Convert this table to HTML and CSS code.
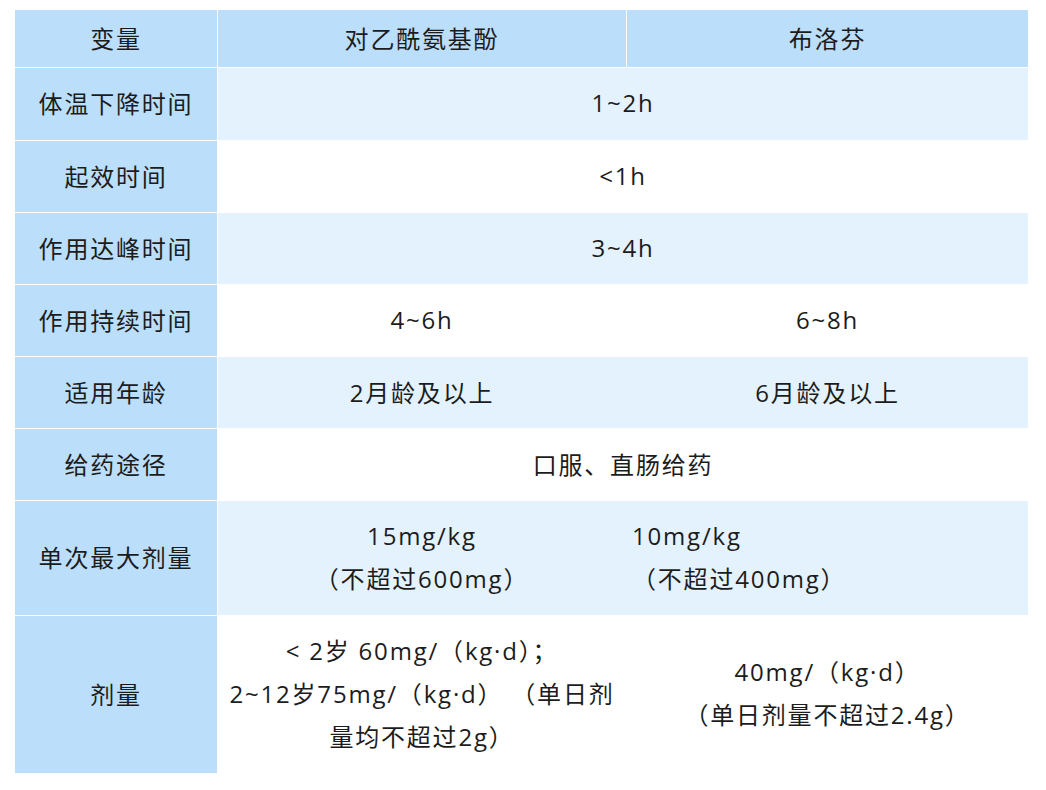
FILE: index.html
```html
<!DOCTYPE html>
<html lang="zh-CN">
<head>
<meta charset="utf-8">
<title>对乙酰氨基酚与布洛芬</title>
<link rel="stylesheet" href="styles.css">
</head>
<body>
<div class="table">
  <div class="row head">
    <div class="label">变量</div>
    <div class="vals two">
      <div class="cell">对乙酰氨基酚</div>
      <div class="cell">布洛芬</div>
    </div>
  </div>
  <div class="row r72 light">
    <div class="label">体温下降时间</div>
    <div class="vals one"><div class="cell">1~2h</div></div>
  </div>
  <div class="row r71 white">
    <div class="label">起效时间</div>
    <div class="vals one"><div class="cell">&lt;1h</div></div>
  </div>
  <div class="row r71 light">
    <div class="label">作用达峰时间</div>
    <div class="vals one"><div class="cell">3~4h</div></div>
  </div>
  <div class="row r71 white">
    <div class="label">作用持续时间</div>
    <div class="vals two">
      <div class="cell">4~6h</div>
      <div class="cell">6~8h</div>
    </div>
  </div>
  <div class="row r71 light">
    <div class="label">适用年龄</div>
    <div class="vals two">
      <div class="cell">2月龄及以上</div>
      <div class="cell">6月龄及以上</div>
    </div>
  </div>
  <div class="row r71 white">
    <div class="label">给药途径</div>
    <div class="vals one"><div class="cell">口服、直肠给药</div></div>
  </div>
  <div class="row r114 light">
    <div class="label">单次最大剂量</div>
    <div class="vals two">
      <div class="cell multi">15mg/kg<br>（不超过600mg）</div>
      <div class="cell multi left">10mg/kg<br>（不超过400mg）</div>
    </div>
  </div>
  <div class="row r157 white">
    <div class="label">剂量</div>
    <div class="vals two">
      <div class="cell multi">&lt; 2岁 60mg/（kg·d）；<br>2~12岁75mg/（kg·d） （单日剂<br>量均不超过2g）</div>
      <div class="cell multi">40mg/（kg·d）<br>（单日剂量不超过2.4g）</div>
    </div>
  </div>
</div>
</body>
</html>
```

FILE: styles.css
```css
html, body {
  margin: 0;
  padding: 0;
  background: #ffffff;
}

body {
  font-family: "Open Sans", "Noto Sans CJK SC", sans-serif;
  font-size: 24px;
  letter-spacing: 1.8px;
  color: #1c1c1c;
}

.table {
  display: grid;
  row-gap: 1px;
  width: 1013px;
  margin: 10px 0 0 15px;
}

.row {
  display: grid;
  grid-template-columns: 202px 810px;
  column-gap: 1px;
}

.head { height: 57px; }
.r72 { height: 72px; }
.r71 { height: 71px; }
.r114 { height: 114px; }
.r157 { height: 157px; }

.label {
  background: #bbdefb;
  display: flex;
  align-items: center;
  justify-content: center;
  white-space: nowrap;
  padding-bottom: 3px;
}

.vals {
  display: grid;
}

.vals.two {
  grid-template-columns: 408px 401px;
  column-gap: 1px;
}

.vals.one {
  grid-template-columns: 1fr;
}

.light .vals { background: #e3f2fd; }
.white .vals { background: #ffffff; }
.head .vals { background: #ffffff; }
.head .cell { background: #bbdefb; }

.cell {
  display: flex;
  align-items: center;
  justify-content: center;
  text-align: center;
  white-space: nowrap;
  padding-bottom: 3px;
}

.cell.multi {
  line-height: 43px;
}

.cell.left {
  justify-content: flex-start;
  text-align: left;
  padding-left: 5px;
}
```
